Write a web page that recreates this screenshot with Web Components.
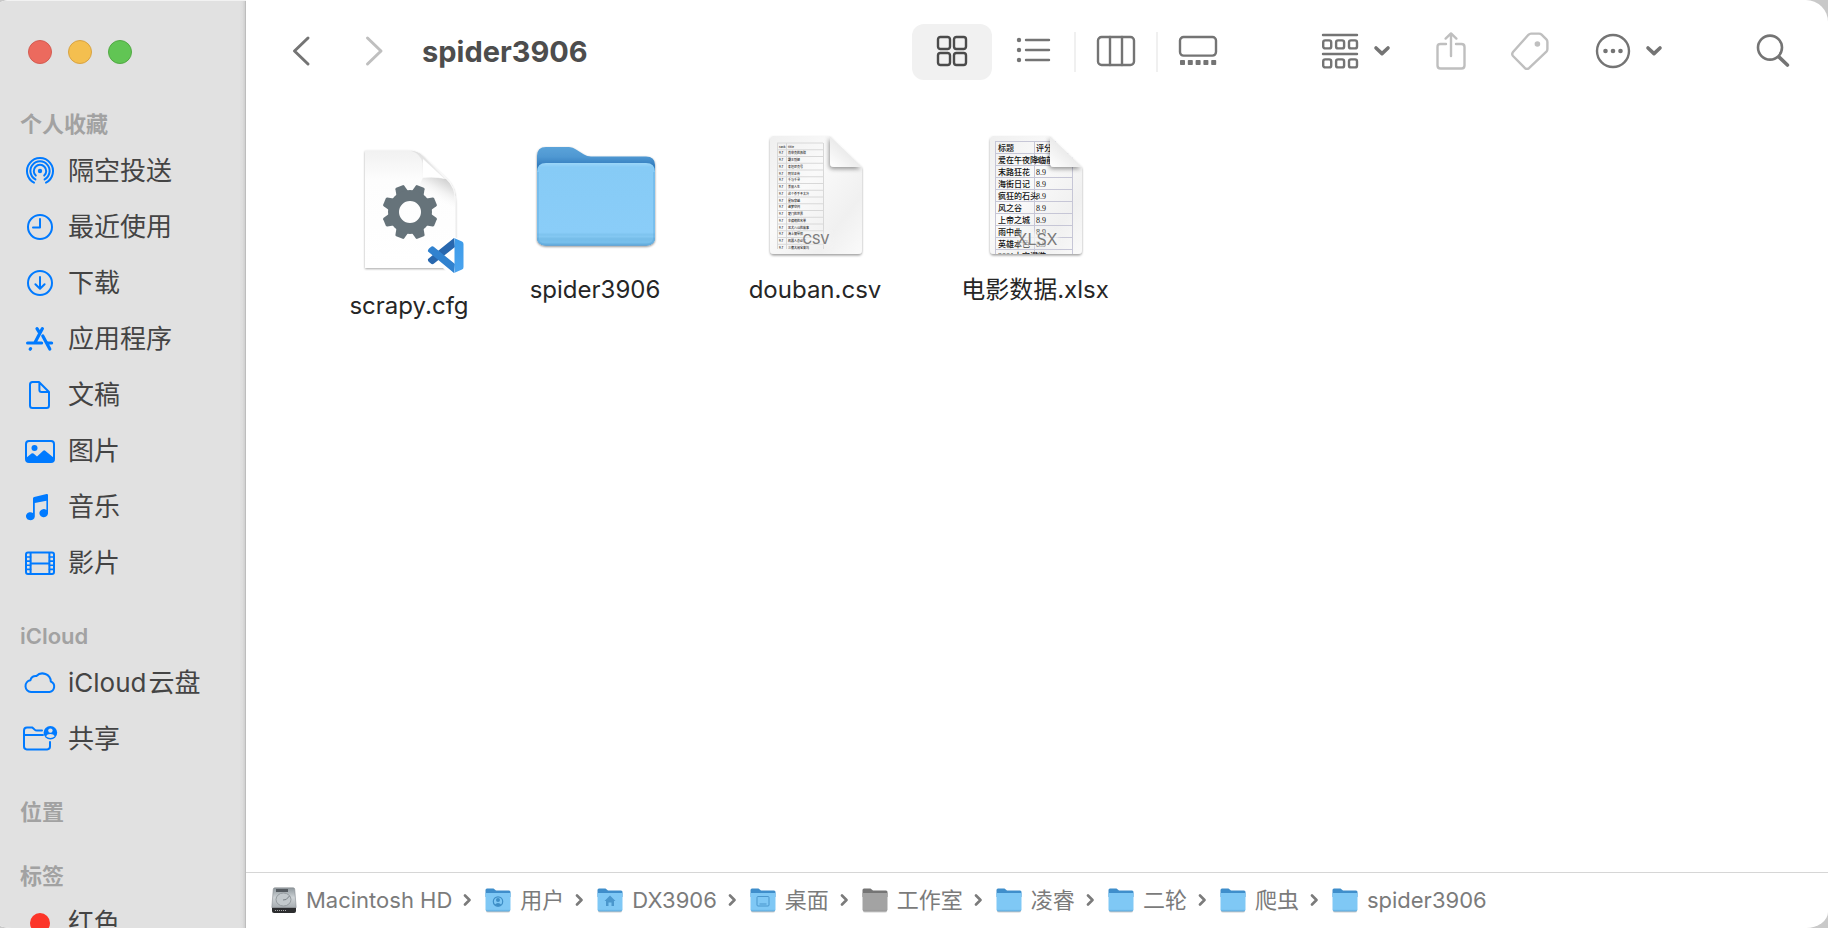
<!DOCTYPE html>
<html lang="zh-CN">
<head>
<meta charset="utf-8">
<meta name="viewport" content="width=device-width, initial-scale=1">
<title>spider3906</title>
<style>
  html, body { margin: 0; height: 100%; background: #c9c9c9; }
  body { font-family: Inter, "Noto Sans CJK SC", sans-serif; overflow: hidden; }
</style>
</head>
<body>
<finder-window>
  <finder-sidebar slot="sidebar">
    <sidebar-section heading="个人收藏">
      <sidebar-item icon="airdrop">隔空投送</sidebar-item>
      <sidebar-item icon="clock">最近使用</sidebar-item>
      <sidebar-item icon="download">下载</sidebar-item>
      <sidebar-item icon="apps">应用程序</sidebar-item>
      <sidebar-item icon="doc">文稿</sidebar-item>
      <sidebar-item icon="photo">图片</sidebar-item>
      <sidebar-item icon="music">音乐</sidebar-item>
      <sidebar-item icon="film">影片</sidebar-item>
    </sidebar-section>
    <sidebar-section heading="iCloud">
      <sidebar-item icon="cloud">iCloud<span style="margin-left:2px">云盘</span></sidebar-item>
      <sidebar-item icon="shared">共享</sidebar-item>
    </sidebar-section>
    <sidebar-section heading="位置"></sidebar-section>
    <sidebar-section heading="标签">
      <sidebar-item icon="red">红色</sidebar-item>
    </sidebar-section>
  </finder-sidebar>
  <finder-toolbar slot="toolbar">spider3906</finder-toolbar>
  <finder-files slot="files">
    <file-item icon="cfg" class="low">scrapy.cfg</file-item>
    <file-item icon="folder">spider3906</file-item>
    <file-item icon="csv">douban.csv</file-item>
    <file-item icon="xlsx">电影数据.xlsx</file-item>
  </finder-files>
  <path-bar slot="path">
    <path-item icon="disk">Macintosh HD</path-item>
    <path-item icon="users">用户</path-item>
    <path-item icon="home">DX3906</path-item>
    <path-item icon="desktop">桌面</path-item>
    <path-item icon="gray">工作室</path-item>
    <path-item icon="mini">凌睿</path-item>
    <path-item icon="mini">二轮</path-item>
    <path-item icon="mini">爬虫</path-item>
    <path-item icon="mini" last>spider3906</path-item>
  </path-bar>
</finder-window>

<script>
const line = (w, body) => `<g fill="none" stroke="currentColor" stroke-width="${w}" stroke-linecap="round" stroke-linejoin="round">${body}</g>`;
const range = n => Array.from({ length: n }, (_, i) => i);

/* Sidebar glyphs: 36 x 36, origin in the middle */
const side = {
  airdrop: line(2, `<path d="M-6 11.6A13 13 0 1 1 6 11.6"/><path d="M-4.6 8.4A9.6 9.6 0 1 1 4.6 8.4"/><path d="M-4.2 4.6A6.2 6.2 0 1 1 4.2 4.6"/>`) + `<circle r="2.2" fill="currentColor"/>`,
  clock: line(2, `<circle r="12"/><path d="M0-8V.5H-7"/>`),
  download: line(2, `<circle r="12"/><path d="M0-6V5.5M-4.6 1.2L0 5.7 4.6 1.2"/>`),
  apps: line(3.2, `<path d="M2.4-10.4L-5 3.4M-3-10.4L-.8-6.8M-12.4 4H1.6M7.6 4H11.6M2.8-3L9.8 10M-9.4 9.6L-9.8 10.2"/>`),
  doc: line(2, `<path d="M-8-13H-1L9-3V10.5Q9 13 6.5 13H-7.5Q-10 13-10 10.5V-10.5Q-10-13-7.5-13ZM-.6-12.6V-5Q-.6-3 1.4-3H9"/>`),
  photo: line(2, `<rect x="-14" y="-10" width="28" height="21" rx="3"/>`) + `<circle cx="-5.5" cy="-3" r="3" fill="currentColor"/><path fill="currentColor" d="M-14 7L-8.5 2.4Q-7.5 1.8-6.5 2.6L-3 5.6 3.2-.3Q4.2-1 5.2-.3L14 7V11H-14Z"/>`,
  music: `<path fill="currentColor" d="M-7-8.6Q-7-9.8-5.8-10.1L6.6-13Q8-13.2 8-12V6.5A4.3 4 0 1 1 6.4 3V-6.3L-5.2-3.9V9.4A4.4 4 0 1 1-7 6Z"/>`,
  film: line(2, `<rect x="-14" y="-10.4" width="28" height="21.4" rx="2"/><path d="M-9.4-10V11M9.4-10V11M-9.4.4H9.4"/>`) + line(1.6, `<path d="M-14-6H-9.4M-14-1.9H-9.4M-14 2.2H-9.4M-14 6.4H-9.4M14-6H9.4M14-1.9H9.4M14 2.2H9.4M14 6.4H9.4"/>`),
  cloud: line(2, `<path d="M-9 9A5.900 5.900 0 0 1-9.600-2.700 5.200 5.200 0 0 1-3.600-7 8.400 8.400 0 0 1 10.800-1.500 5.500 5.500 0 0 1 9.600 9Z"/>`),
  shared: line(2, `<path d="M2-8.4H-3.2Q-4.4-8.4-5.4-9.4T-8-11.6H-13Q-16-11.6-16-8.6V7.6Q-16 10.4-13.2 10.4H7.2Q10 10.4 10 7.6V3M-16-4H3"/>`) + `<circle cx="10.4" cy="-6.2" r="6.8" fill="currentColor"/><circle cx="10.4" cy="-8.4" r="2.2" fill="#e1e1e1"/><path fill="#e1e1e1" d="M6-2.8Q7-5 10.4-5T14.8-2.8Q13-1 10.4-1T6-2.8Z"/>`,
  red: `<circle r="10" fill="#fc3529"/>`
};

/* Toolbar glyphs: [width, height, markup] */
const tools = {
  back: [20, 32, line(3, `<path d="M16 3L2.500 16 16 29"/>`)],
  forward: [20, 32, line(3, `<path d="M3.500 3L17 16 3.500 29"/>`)],
  grid: [32, 32, line(2.4, [[2, 2], [18, 2], [2, 18], [18, 18]].map(p => `<rect x="${p[0]}" y="${p[1]}" width="12" height="12" rx="2.4"/>`).join(''))],
  list: [36, 32, [5, 15, 25].map(y => `<circle cx="3" cy="${y}" r="2.2" fill="currentColor"/>`).join('') + line(2.4, `<path d="M10 5H33M10 15H33M10 25H33"/>`)],
  columns: [40, 32, line(2.4, `<rect x="2" y="2" width="36" height="28" rx="3.6"/><path d="M14 2V30M26 2V30"/>`)],
  gallery: [40, 32, line(2.4, `<rect x="2" y="2" width="36" height="18.6" rx="3.6"/>`) + range(5).map(i => `<rect x="${2 + i * 7.8}" y="25" width="5" height="5" rx=".8" fill="currentColor"/>`).join('')],
  group: [38, 38, line(2.4, `<path d="M2 3H36M2 22H36"/>` + range(6).map(i => `<rect x="${2.2 + (i % 3) * 12.9}" y="${i < 3 ? 8.4 : 27.4}" width="8" height="8" rx="2"/>`).join(''))],
  down: [18, 16, line(3.6, `<path d="M3 5L9 10.6 15 5"/>`)],
  share: [32, 40, line(2.4, `<path d="M11 13H5.5Q2.5 13 2.5 16V34.5Q2.5 37.5 5.5 37.5H26.5Q29.5 37.5 29.5 34.5V16Q29.5 13 26.5 13H21M16 25V2.6M10.6 7.6L16 2.4 21.4 7.6"/>`)],
  tag: [40, 40, line(2.4, `<path d="M21 2.6H29Q30.6 2.6 31.6 3.6L36.4 8.4Q37.4 9.4 37.4 11V18Q37.4 19.6 36.4 20.6L19 37.2Q17 38.6 15 37.2L3 25Q1.4 23 3 21L18.4 3.8Q19.6 2.6 21 2.6Z"/>`) + `<circle cx="27.4" cy="13" r="2.8" fill="currentColor"/>`],
  more: [36, 36, line(2.4, `<circle cx="18" cy="18" r="16"/>`) + [10.5, 18, 25.5].map(x => `<circle cx="${x}" cy="18" r="2.3" fill="currentColor"/>`).join('')],
  search: [36, 36, line(2.6, `<circle cx="15" cy="14.6" r="12"/>`) + line(3.6, `<path d="M24.4 24.4L32.4 32"/>`)]
};

/* File pictures: 128 x 128 */
const folder = `
<defs>
  <linearGradient id="fb" x2="0" y2="1"><stop stop-color="#5ba3d9"/><stop offset=".1" stop-color="#4f98d2"/><stop offset=".18" stop-color="#347fc0"/></linearGradient>
  <linearGradient id="ff" x2="0" y2="1"><stop stop-color="#9cd6f8"/><stop offset=".05" stop-color="#86cbf6"/><stop offset=".84" stop-color="#8acdf8"/><stop offset=".87" stop-color="#7dc3ee"/><stop offset=".89" stop-color="#84c8f2"/><stop offset=".92" stop-color="#75bce8"/><stop offset=".96" stop-color="#79c0ec"/><stop offset="1" stop-color="#6ab2e0"/></linearGradient>
  <filter id="fs" x="-10%" y="-10%" width="120%" height="125%"><feDropShadow dx="0" dy="1" stdDeviation="1" flood-opacity=".45"/></filter>
</defs>
<g filter="url(#fs)"><path fill="url(#fb)" d="M6 27Q6 18 15 18H38Q42 18 45 20.500L53 25.500Q56 27.500 60 27.500H115Q124 27.500 124 36V108Q124 116.500 115 116.500H15Q6 116.500 6 108Z"/>
<path fill="url(#ff)" d="M6 43Q6 34 15 34H115Q124 34 124 43V108Q124 116.500 115 116.500H15Q6 116.500 6 108Z"/></g>
<path fill="none" stroke="#5aa5d8" stroke-opacity=".45" stroke-width="1.500" d="M7 43V108Q7 115.500 15 115.500H115Q123 115.500 123 108V43"/>`;

const sheet = `
<defs>
  <linearGradient id="pg" x2="1" y2="1"><stop stop-color="#efefef"/><stop offset=".4" stop-color="#fafafa"/><stop offset=".75" stop-color="#f0f0f0"/><stop offset="1" stop-color="#fafafa"/></linearGradient>
  <linearGradient id="cr" x1="0" y1="1" x2=".6" y2=".35"><stop stop-color="#fff"/><stop offset="1" stop-color="#e6e6e6"/></linearGradient>
  <filter id="ps" x="-10%" y="-10%" width="120%" height="120%"><feDropShadow dx="0" dy="1.500" stdDeviation="1.200" flood-opacity=".38"/></filter>
  <filter id="cs" x="-30%" y="-30%" width="160%" height="160%"><feDropShadow dx="-1" dy="2" stdDeviation="2.200" flood-opacity=".4"/></filter>
  <filter id="halo" x="-30%" y="-60%" width="160%" height="220%"><feGaussianBlur stdDeviation="2"/></filter>
  <clipPath id="pc"><path d="M23 7H79L111 38V121Q111 125 107 125H23Q19 125 19 121V11Q19 7 23 7Z"/></clipPath>
</defs>
<path filter="url(#ps)" fill="url(#pg)" d="M23 7H79L111 38V121Q111 125 107 125H23Q19 125 19 121V11Q19 7 23 7Z"/>`;
const curl = `<g clip-path="url(#pc)"><path filter="url(#cs)" fill="url(#cr)" d="M79 7V34Q79 38 83 38H111Z"/></g>`;

const titles = ['title', '肖申克的救赎', '霸王别姬', '泰坦尼克号', '阿甘正传', '千与千寻', '美丽人生', '这个杀手不太冷', '星际穿越', '盗梦空间', '楚门的世界', '辛德勒的名单', '忠犬八公的故事', '海上钢琴师', '机器人总动员', '三傻大闹宝莱坞'];
const films = ['标题', '爱在午夜降临前', '末路狂花', '海街日记', '疯狂的石头', '风之谷', '上帝之城', '雨中曲', '英雄本色', '2001太空漫游'];

const csv = sheet + `<g clip-path="url(#pc)">
  <path fill="none" stroke="#d8d8d8" stroke-width="1" d="M26.500 14V120M35.500 14V120M72.500 14V120${range(16).map(i => `M26 ${14 + i * 6.75}H72`).join('')}"/>
  <g font-size="3" font-weight="500" fill="#222" font-family="'Noto Sans CJK SC',sans-serif">${titles.map((t, i) => `<text x="28" y="${18.6 + i * 6.75}">${i ? '9.7' : 'rank'}</text><text x="37" y="${18.6 + i * 6.75}">${t}</text>`).join('')}</g>
</g><rect x="52" y="104" width="27" height="12" fill="#f6f6f6" opacity=".6" filter="url(#halo)"/>
<text x="65" y="115" text-anchor="middle" font-size="13" font-weight="500" fill="#7e7e7e" font-family="Inter,sans-serif">CSV</text>` + curl;

const xlsx = sheet + `<g clip-path="url(#pc)">
  <path fill="none" stroke="#c6c6d6" stroke-width="1" d="M24.500 12V126M63.500 12V126M101.500 12V126${range(10).map(i => `M24 ${12.500 + i * 12}H101`).join('')}"/>
  <g font-size="8" font-weight="500" fill="#111" font-family="'Liberation Serif','Noto Sans CJK SC',serif">${films.map((t, i) => `<text x="27" y="${22 + i * 12}">${t}</text><text x="65" y="${22 + i * 12}">${i ? '8.9' : '评分'}</text>`).join('')}</g>
</g><rect x="47" y="103" width="40" height="14" fill="#f6f6f6" opacity=".75" filter="url(#halo)"/>
<text x="66" y="116" text-anchor="middle" font-size="16" fill="#7a7a7a" font-family="Inter,sans-serif">XLSX</text>` + curl;

const cfg = `
<defs>
  <linearGradient id="gp" x2="0" y2="1"><stop stop-color="#f1f1f1"/><stop offset=".25" stop-color="#fdfdfd"/><stop offset="1" stop-color="#fff"/></linearGradient>
  <linearGradient id="gc" x1=".2" y1="1" x2=".65" y2=".2"><stop stop-color="#fff"/><stop offset="1" stop-color="#dcdcdc"/></linearGradient>
  <linearGradient id="gu" gradientUnits="userSpaceOnUse" x1="98" y1="32" x2="86" y2="54"><stop stop-color="#c4c4c4"/><stop offset=".5" stop-color="#eee"/><stop offset="1" stop-color="#fff" stop-opacity="0"/></linearGradient>
  <linearGradient id="vr" x2="0" y2="1"><stop stop-color="#3d9be8"/><stop offset="1" stop-color="#4ba4ef"/></linearGradient>
  <filter id="gs" x="-10%" y="-10%" width="120%" height="120%"><feDropShadow dx="0" dy="1" stdDeviation=".8" flood-opacity=".35"/></filter>
</defs>
<path filter="url(#gs)" fill="url(#gp)" d="M20 5.500H64Q72 5.500 78 11L102 34Q110.500 42 110.500 56V123H20Z"/>
<path fill="url(#gu)" d="M78 32.500Q92 31 101 34Q110 42 110 56V62L70 50Z" opacity=".8"/>
<path fill="url(#gc)" d="M66 5.700Q76 9 77.500 18V32.500Q92 32 101 34L78 11Q73 6 66 5.700Z"/>
<path fill="#fff" d="M78 14V32.500Q90 31 99 33.500Z"/>
<g fill="#66737a">${range(8).map(i => `<path transform="translate(65 67) rotate(${22.5 + i * 45})" d="M-6.500-19L-4.800-26.500Q-4.500-27.500-3.500-27.600H3.500Q4.500-27.500 4.800-26.500L6.500-19Z"/>`).join('')}
<path fill-rule="evenodd" d="M65 45A22 22 0 1 1 65 89A22 22 0 1 1 65 45ZM65 56A11 11 0 1 0 65 78A11 11 0 1 0 65 56Z"/></g>
<path fill="#fff" d="M80 101L87 96 96 101 107 91 122 97V128H103L94 119 86 123 79 116Z"/>
<path fill="#2867ae" d="M109 93L83 114Q82.500 115.500 84 117L86.500 119Q88 119.500 89 118.500L110 102Z"/>
<path fill="#3182cf" d="M109 128L83 106.500Q82.500 105 84 103.500L86.500 101.500Q88 101 89 102L110 119Z"/>
<path fill="url(#vr)" d="M109 93L117 96.500Q118.500 97 118.500 99V122Q118.500 124 117 124.500L109 128Q109.500 127.500 109.500 126V95Q109.500 93.500 109 93Z"/>`;

/* Path bar pictures: 26 x 26 */
const mini = (a, b, c, extra = '') => `<defs><linearGradient id="m" x2="0" y2="1"><stop stop-color="${b}"/><stop offset=".88" stop-color="${b}"/><stop offset="1" stop-color="${c}"/></linearGradient></defs>
<path fill="#000" opacity=".2" d="M1 22H25V24Q25 25.500 23 25.500H3Q1 25.500 1 24Z"/>
<path fill="${a}" d="M.500 3Q.500 1.500 2 1.500H8.500L11 3.500H24Q25.500 3.500 25.500 5V10H.500Z"/><path fill="url(#m)" d="M.500 6H25.500V22.500Q25.500 24.500 23.500 24.500H2.500Q.500 24.500 .500 22.500Z"/>${extra}`;
const blue = extra => mini('#3f8ecb', '#7fc8f5', '#5aa6d8', extra);
const small = {
  disk: `<defs><linearGradient id="d" x2="0" y2="1"><stop stop-color="#8e979c"/><stop offset=".5" stop-color="#ced3d6"/><stop offset="1" stop-color="#a7adb1"/></linearGradient></defs>
  <path fill="#2c2d2f" d="M1 20.500H25V24Q25 26 23 26H3Q1 26 1 24Z"/><path fill="url(#d)" stroke="#868c90" stroke-width=".6" d="M4 .800H22Q23.500 .800 23.700 2L25.200 20.500H.800L2.300 2Q2.500 .800 4 .800Z"/>
  <path fill="#555b60" d="M5 2H17V5H5Z"/><ellipse cx="12.500" cy="12.500" rx="7.500" ry="6.500" fill="#c3c9cc" stroke="#959b9f"/><path fill="none" stroke="#7b8287" d="M12 13Q15 14 18.500 9"/><path stroke="#aaa" stroke-dasharray="1 1" d="M4 23.500H16"/>`,
  users: blue(`<circle cx="13" cy="14.500" r="4.700" fill="none" stroke="#3e8ec6" stroke-width="1.200"/><circle cx="13" cy="13" r="2" fill="#3e8ec6"/><path fill="#3e8ec6" d="M9.500 18Q13 14 16.500 18L13 19.500Z"/>`),
  home: blue(`<path fill="#4a97cd" d="M13 8.500L18.500 14H17V19H14.500V15.500H11.500V19H9V14H7.500Z"/>`),
  desktop: blue(`<rect x="7" y="9.500" width="12" height="9.500" rx="1" fill="none" stroke="#4a97cd"/><path stroke="#4a97cd" d="M9.500 17H16.500"/>`),
  gray: mini('#757575', '#a3a3a3', '#989898'),
  mini: blue('')
};

const svg = (w, h, box, body) => `<svg width="${w}" height="${h}" viewBox="${box}" aria-hidden="true">${body}</svg>`;
const artwork = { cfg, folder, csv, xlsx };
function picture(name) {
  if (side[name]) return svg(36, 36, '-18 -18 36 36', side[name]);
  if (tools[name]) return svg(tools[name][0], tools[name][1], `0 0 ${tools[name][0]} ${tools[name][1]}`, tools[name][2]);
  if (artwork[name]) return svg(128, 128, '0 0 128 128', artwork[name]);
  return svg(26, 26, '0 0 26 26', small[name]);
}

class Base extends HTMLElement {
  connectedCallback() {
    if (this.shadowRoot) return;
    this.attachShadow({ mode: 'open' }).innerHTML = this.render();
  }
}
const define = (name, render) => customElements.define(name, class extends Base { render() { return render(this); } });

define('finder-icon', el => `<style>:host{display:block;flex:none}svg{display:block;overflow:visible}</style>${picture(el.getAttribute('name'))}`);

define('finder-window', () => `<style>
  :host{display:grid;grid-template-columns:246px minmax(0,1fr);height:100vh;overflow:hidden;background:#fff;border-radius:12px 22px 22px 12px / 3px 22px 16px 3px}
  section{display:flex;flex-direction:column;min-width:0;min-height:0}
  main{flex:1;min-height:0;overflow:hidden}
</style><slot name="sidebar"></slot><section><slot name="toolbar"></slot><main><slot name="files"></slot></main><slot name="path"></slot></section>`);

define('finder-sidebar', () => `<style>
  :host{display:block;box-sizing:border-box;min-height:0;overflow:hidden;background:linear-gradient(to left,#bdbdbd 0 1px,#d2d2d2 1px 2px,#dcdcdc 3px,#e1e1e1 6px);border-top:1px solid #f2f2f2;color:#444}
  .lights{display:flex;gap:16px;padding:39px 28px 0;height:65px}
  button{width:24px;height:24px;padding:0;border:1px solid;border-radius:50%}
  .close{background:#ec6a5e;border-color:#d35c52}.min{background:#f4bf4f;border-color:#d8a343}.max{background:#61c554;border-color:#52a944}
  nav{display:flex;flex-direction:column;gap:26px}
</style><div class="lights"><button class="close" aria-label="关闭"></button><button class="min" aria-label="最小化"></button><button class="max" aria-label="缩放"></button></div><nav><slot></slot></nav>`);

define('sidebar-section', el => `<style>
  :host{display:block}
  h2{margin:0;padding-left:20px;font-size:22px;line-height:38px;font-weight:600;color:#a2a2a2}
</style><h2>${el.getAttribute('heading')}</h2><slot></slot>`);

define('sidebar-item', el => `<style>
  :host{display:block}
  a{display:flex;align-items:center;gap:10px;height:56px;padding-left:22px;color:inherit;text-decoration:none;font-size:26px;line-height:36px;white-space:nowrap}
  finder-icon{color:#007aff}
</style><a href="#"><finder-icon name="${el.getAttribute('icon')}"></finder-icon><span><slot></slot></span></a>`);

define('finder-toolbar', () => `<style>
  :host{display:flex;align-items:center;height:103px;padding:0 31px 0 32px;color:#747474}
  button{display:flex;align-items:center;justify-content:center;box-sizing:border-box;height:56px;padding:0 0 2px;border:0;border-radius:12px;background:none;color:inherit;width:48px}
  h1{flex:1;min-width:0;margin:0;padding-left:24px;font-size:29px;line-height:40px;font-weight:700;color:#4d4d4d;white-space:nowrap}
  .nav{display:flex;gap:24px}
  .off{color:#bfbfbf}
  .views{display:flex;align-items:center;margin-right:76px}
  .views button{width:80px}
  .views .on{background:#f1f1f1;color:#4b4b4b}
  i{width:2px;height:40px;background:#f0f0f0}i.none{background:none}
  .actions{display:flex;align-items:center}
  .menu{width:84px;gap:14px}
</style>
<div class="nav"><button aria-label="返回"><finder-icon name="back"></finder-icon></button><button class="off" aria-label="前进"><finder-icon name="forward"></finder-icon></button></div>
<h1><slot></slot></h1>
<div class="views"><button class="on" aria-label="图标"><finder-icon name="grid"></finder-icon></button><i class="none"></i><button aria-label="列表"><finder-icon name="list"></finder-icon></button><i></i><button aria-label="分栏"><finder-icon name="columns"></finder-icon></button><i></i><button aria-label="画廊"><finder-icon name="gallery"></finder-icon></button></div>
<div class="actions">
  <button class="menu" aria-label="群组"><finder-icon name="group"></finder-icon><finder-icon name="down"></finder-icon></button>
  <button class="off" style="margin-left:29px" aria-label="共享"><finder-icon name="share"></finder-icon></button>
  <button class="off" style="margin-left:31px" aria-label="标签"><finder-icon name="tag"></finder-icon></button>
  <button class="menu" style="margin-left:33px" aria-label="操作"><finder-icon name="more"></finder-icon><finder-icon name="down"></finder-icon></button>
  <button style="margin-left:78px" aria-label="搜索"><finder-icon name="search"></finder-icon></button>
</div>`);

define('finder-files', () => `<style>
  :host{display:grid;grid-template-columns:152px repeat(auto-fill,220px);padding:26px 24px 0 87px}
  ::slotted(.low){padding-top:16px}
</style><slot></slot>`);

define('file-item', el => `<style>
  :host{display:flex;flex-direction:column;align-items:center;gap:17px;color:#262626;font-size:24px;line-height:32px;white-space:nowrap}
</style><finder-icon name="${el.getAttribute('icon')}"></finder-icon><span><slot></slot></span>`);

define('path-bar', () => `<style>
  :host{display:flex;align-items:center;box-sizing:border-box;height:56px;padding:0 24px 2px 25px;border-top:1px solid #d6d6d6;color:#7b7b7b;overflow:hidden}
</style><slot></slot>`);

define('path-item', el => `<style>
  :host{display:flex;align-items:center;flex:none}
  a{display:flex;align-items:center;gap:9px;color:inherit;text-decoration:none;font-size:22px;line-height:32px;white-space:nowrap}
  svg{display:block;margin:0 14px 0 11px}
</style><a href="#"><finder-icon name="${el.getAttribute('icon')}"></finder-icon><span><slot></slot></span></a>${el.hasAttribute('last') ? '' : svg(8, 14, '0 0 8 14', line(2.6, '<path d="M2 2.500L6.500 7 2 11.500"/>'))}`);
</script>
</body>
</html>
